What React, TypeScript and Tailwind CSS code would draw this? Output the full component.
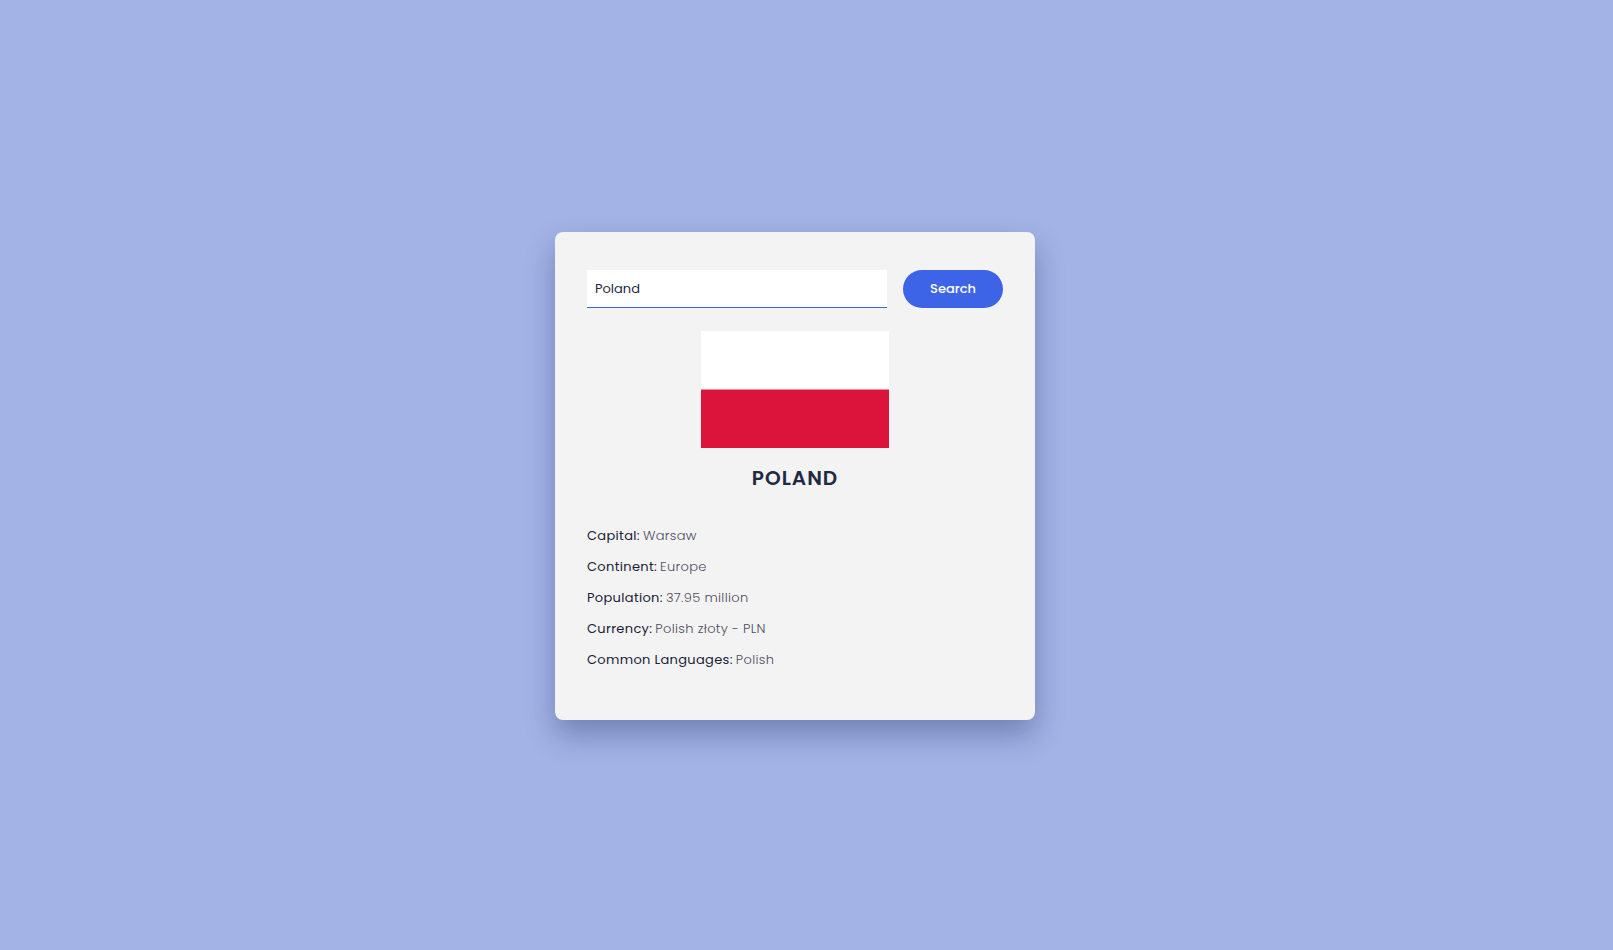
import React, { useState } from "react";

const facts = [
  { label: "Capital", value: "Warsaw" },
  { label: "Continent", value: "Europe" },
  { label: "Population", value: "37.95 million" },
  { label: "Currency", value: "Polish złoty - PLN" },
  { label: "Common Languages", value: "Polish" },
];

export default function App() {
  const [query, setQuery] = useState("Poland");

  return (
    <main className="flex min-h-screen items-center justify-center bg-[#a3b3e6] pt-0.5 pr-[23px] font-[Poppins,Inter,sans-serif]">
      <div className="w-full max-w-[480px] rounded-lg bg-[#f3f3f3] px-8 pt-[38px] pb-[50px] shadow-[0_15px_30px_rgba(8,21,65,0.3)]">
        <form className="flex gap-4" onSubmit={(e) => e.preventDefault()}>
          <input
            type="text"
            aria-label="Country name"
            value={query}
            onChange={(e) => setQuery(e.target.value)}
            className="h-[38px] min-w-0 flex-1 border-b border-[#3d64e6] bg-white px-2 pt-px text-[13px] font-normal text-[#222a43] outline-none"
          />
          <button type="submit" className="h-[38px] w-[100px] rounded-full bg-[#3d64e6] text-[13px] font-medium text-white">
            Search
          </button>
        </form>
        <svg viewBox="0 0 188 117" role="img" aria-label="Flag of Poland" className="mx-auto mt-[23px] block w-[188px]">
          <rect width="188" height="117" fill="#fff" />
          <rect y="58.5" width="188" height="58.5" fill="#dc143c" />
        </svg>
        <h1 className="mt-4 text-center text-xl leading-7 font-semibold tracking-wider text-[#222a43] uppercase">Poland</h1>
        <dl className="mt-[34px] flex flex-col gap-[11px] text-[13px] leading-5 tracking-wide">
          {facts.map((fact) => (
            <div key={fact.label} className="flex gap-[3px]">
              <dt className="font-normal text-[#1b2138]">{fact.label}:</dt>
              <dd className="font-light text-[#4f4b62]">{fact.value}</dd>
            </div>
          ))}
        </dl>
      </div>
    </main>
  );
}
